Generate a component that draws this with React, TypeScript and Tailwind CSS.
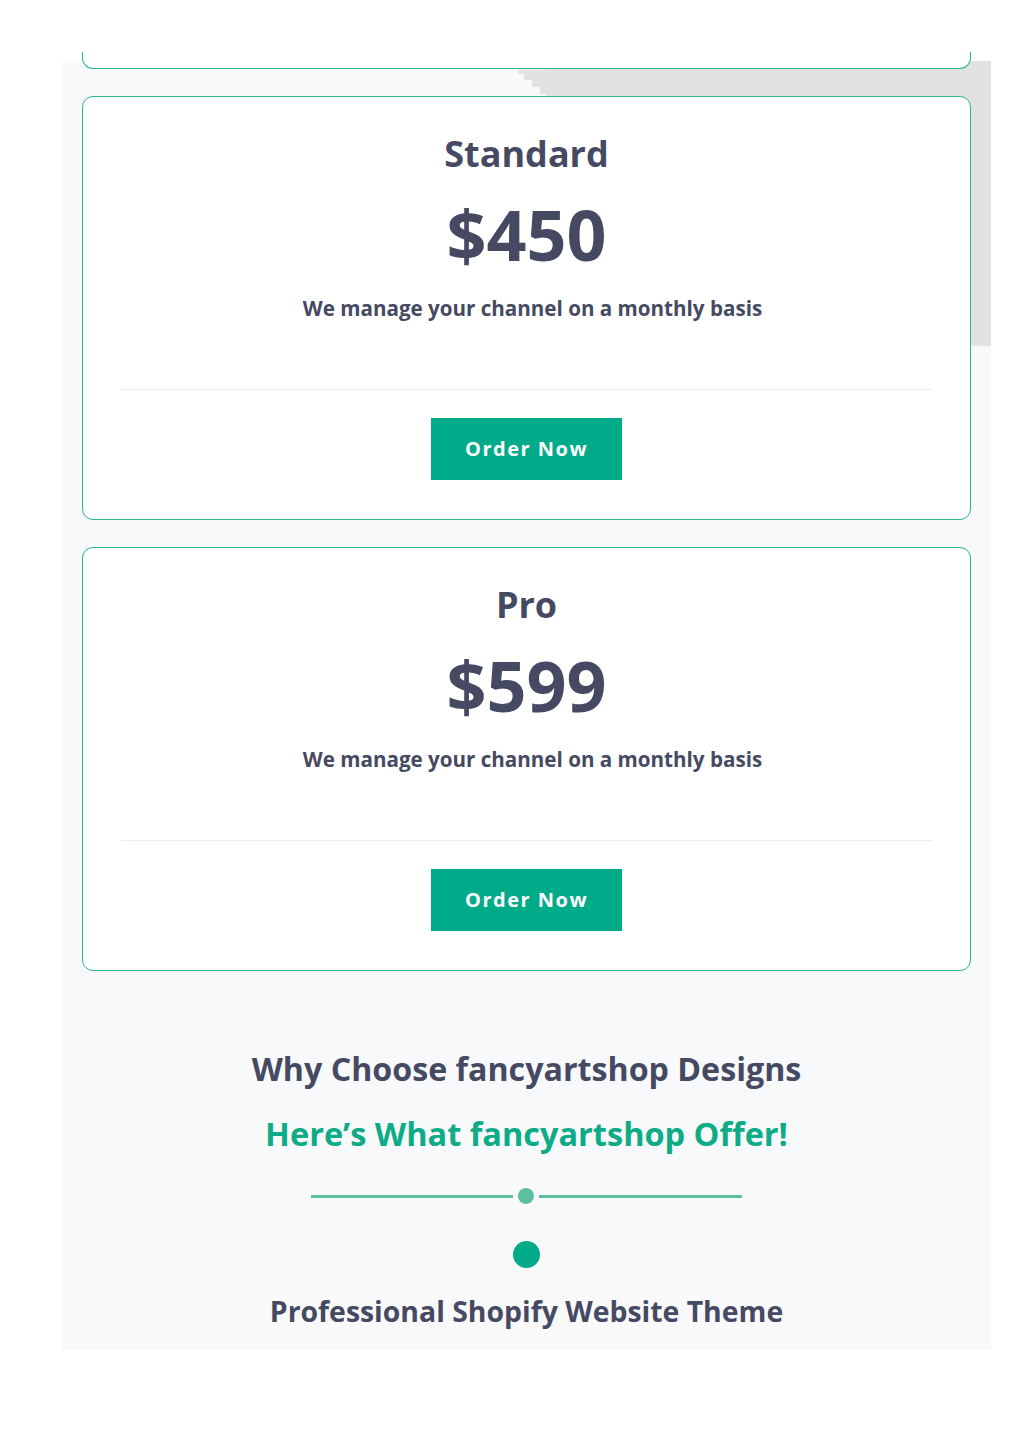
const plans = [
  { name: 'Standard', price: '$450', note: 'We manage your channel on a monthly basis' },
  { name: 'Pro', price: '$599', note: 'We manage your channel on a monthly basis' },
];

function PlanCard({ name, price, note }: { name: string; price: string; note: string }) {
  return (
    <div className="relative bg-white border border-[#2bb394] rounded-[11px] flex flex-col items-center pt-[33px] pb-[39px] px-[38px]">
      <h3 className="text-[36px] leading-[48px] font-bold text-[#454a62]">{name}</h3>
      <div className="mt-[16px] text-[70px] leading-[80px] font-bold text-[#454a62]">{price}</div>
      <p className="mt-[20px] ml-[12px] text-[20.6px] leading-[28px] font-bold text-[#454a62]">{note}</p>
      <div className="mt-[67px] h-px w-full bg-[#ececec]" />
      <button className="mt-[28px] w-[191px] h-[62px] bg-[#00ab8a] text-white text-[20px] font-bold tracking-[1.5px]">
        Order Now
      </button>
    </div>
  );
}

export default function App() {
  return (
    <div className="min-h-[1449px] bg-white pt-[61px] font-['Open_Sans','Noto_Sans',sans-serif]">
      <section className="relative ml-[62px] w-[929px] bg-[#f9f9f9] flex flex-col px-[20px] pb-[19px]">
        {/* grey shadow block sitting behind the cards */}
        <div className="absolute top-0 left-[450px] w-[479px] h-[283px] bg-[#e2e2e2] [clip-path:polygon(0_9px,6px_9px,6px_13px,12px_13px,12px_19px,20px_19px,20px_26px,28px_26px,28px_33px,34px_33px,34px_35px,34px_100%,100%_100%,100%_0,460px_0,460px_0)]" />
        <div className="absolute top-0 right-0 w-[20px] h-[285px] bg-[#e2e2e2]" />

        <div className="relative -mt-[9px] h-[17px] bg-white border-x border-b border-[#2bb394] rounded-b-[11px]" />

        <div className="relative mt-[27px] flex flex-col gap-[27px]">
          {plans.map(p => (
            <PlanCard key={p.name} {...p} />
          ))}
        </div>

        <div className="mt-[60px] -mx-[20px] bg-[#f8f9fb] flex flex-col items-center pt-[16px] pb-[25px]">
          <h2 className="text-[32.2px] leading-[44px] font-bold text-[#454a62]">Why Choose fancyartshop Designs</h2>
          <h2 className="mt-[21px] text-[32.5px] leading-[44px] font-bold text-[#0eab87]">Here’s What fancyartshop Offer!</h2>
          <div className="mt-[32px] flex items-center">
            <div className="w-[202px] h-[3px] bg-[#5cbf9e]" />
            <div className="mx-[5px] w-[16px] h-[16px] rounded-full bg-[#5cbf9e]" />
            <div className="w-[203px] h-[3px] bg-[#5cbf9e]" />
          </div>
        </div>

        <div className="mt-[12px] self-center w-[27px] h-[27px] rounded-full bg-[#00ab8a]" />
        <h3 className="mt-[23px] text-center text-[28.4px] leading-[40px] font-bold text-[#454a62]">
          Professional Shopify Website Theme
        </h3>
      </section>
    </div>
  );
}
